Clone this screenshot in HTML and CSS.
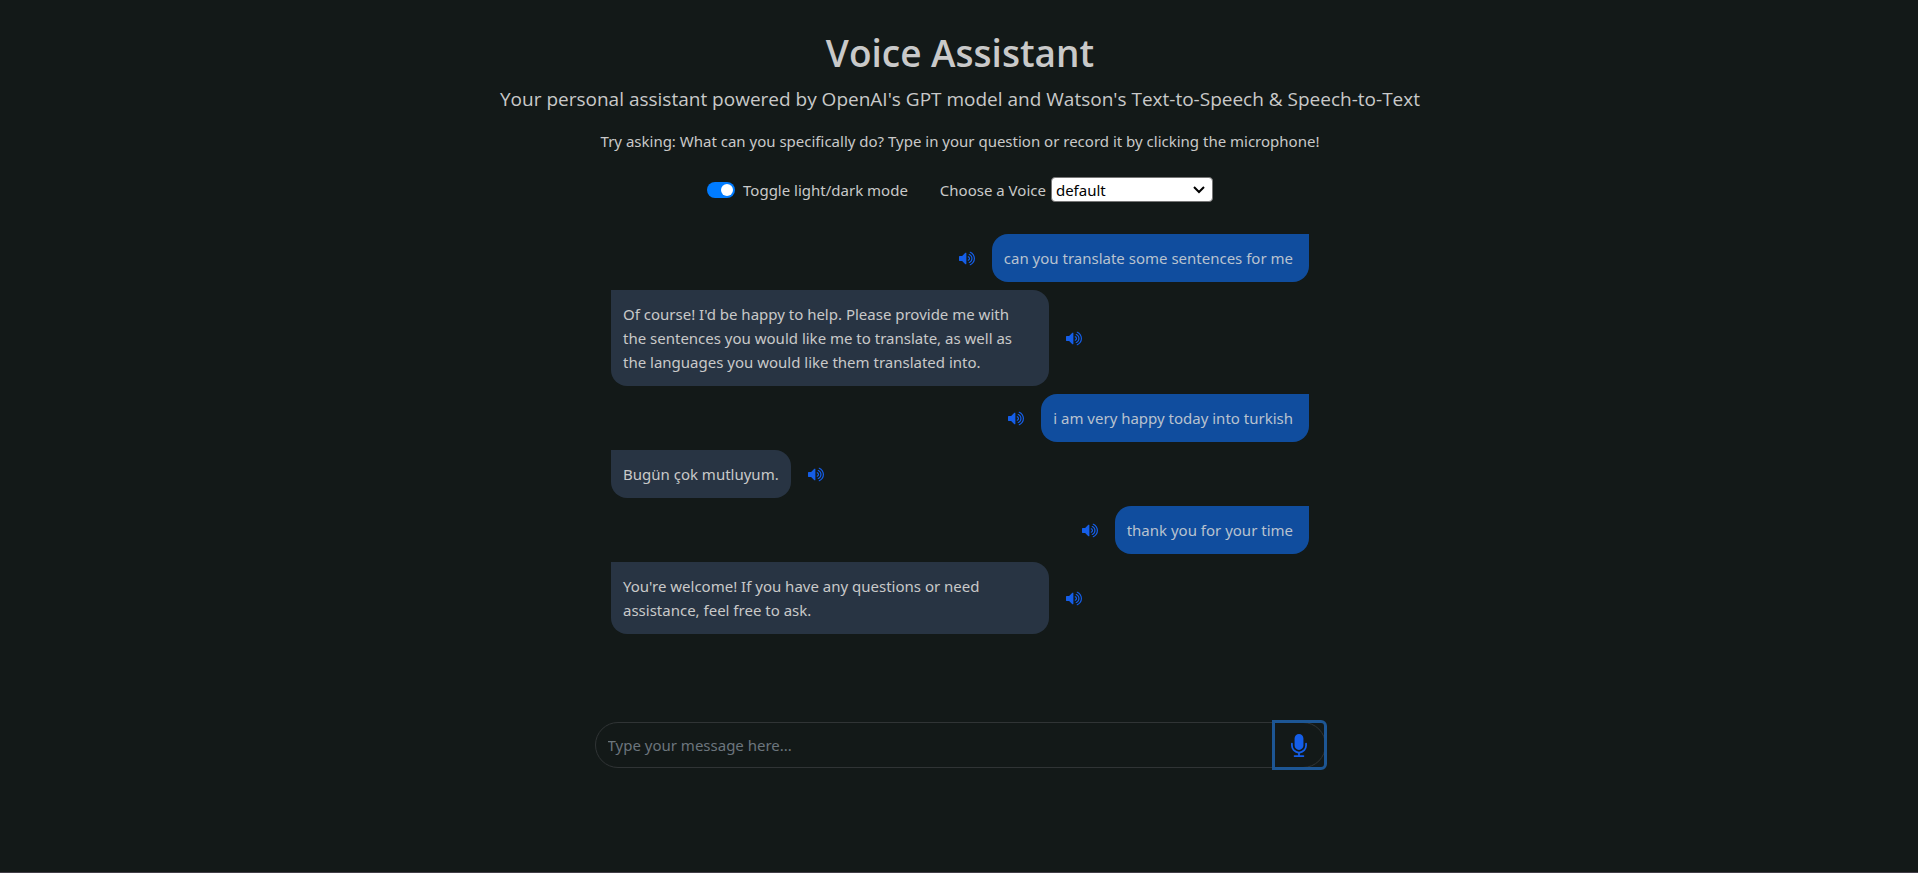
FILE: index.html
```html
<!DOCTYPE html>
<html lang="en">
<head>
<meta charset="utf-8">
<title>Voice Assistant</title>
<link rel="stylesheet" href="styles.css">
</head>
<body>
<svg class="sprite" aria-hidden="true">
  <symbol id="volume" viewBox="64 128 1664 1536"><path d="M832 352v1088q0 26-19 45t-45 19-45-19l-333-333h-262q-26 0-45-19t-19-45v-384q0-26 19-45t45-19h262l333-333q19-19 45-19t45 19 19 45zm384 544q0 76-42.5 141.5t-112.5 93.5q-10 5-25 5-26 0-45-18.5t-19-45.5q0-21 12-35.5t29-25 34-23 29-36 12-56.5-12-56.5-29-36-34-23-29-25-12-35.5q0-27 19-45.5t45-18.5q15 0 25 5 70 27 112.5 93t42.5 142zm256 0q0 153-85 282.5t-225 188.5q-13 5-25 5-27 0-46-19t-19-45q0-39 39-59 56-29 76-44 74-54 115.5-135.5t41.5-173.5-41.5-173.5-115.5-135.5q-20-15-76-44-39-20-39-59 0-26 19-45t45-19q13 0 26 5 140 59 225 188.5t85 282.5zm256 0q0 230-127 422.5t-338 283.5q-13 5-26 5-26 0-45-19t-19-45q0-36 39-59 7-4 22.5-10.5t22.5-10.5q46-25 82-51 123-91 192-227t69-289-69-289-192-227q-36-26-82-51-7-4-22.5-10.5t-22.5-10.5q-39-23-39-59 0-26 19-45t45-19q13 0 26 5 211 91 338 283.5t127 422.5z"/></symbol>
  <symbol id="mic" viewBox="320 0 1152 1664"><path d="M1472 704v128q0 221-147.5 384.5t-364.5 187.5v132h256q26 0 45 19t19 45-19 45-45 19h-640q-26 0-45-19t-19-45 19-45 45-19h256v-132q-217-24-364.5-187.5t-147.5-384.5v-128q0-26 19-45t45-19 45 19 19 45v128q0 185 131.5 316.5t316.5 131.5 316.5-131.5 131.5-316.5v-128q0-26 19-45t45-19 45 19 19 45zm-256-384v512q0 132-94 226t-226 94-226-94-94-226v-512q0-132 94-226t226-94 226 94 94 226z"/></symbol>
</svg>
<main class="page">
  <header class="intro">
    <h1 class="title">Voice Assistant</h1>
    <p class="lead">Your personal assistant powered by OpenAI's GPT model and Watson's Text-to-Speech &amp; Speech-to-Text</p>
    <p class="hint">Try asking: What can you specifically do? Type in your question or record it by clicking the microphone!</p>
  </header>
  <div class="options">
    <div class="option">
      <input class="switch" type="checkbox" role="switch" id="mode" checked>
      <label for="mode">Toggle light/dark mode</label>
    </div>
    <div class="voice">
      <label for="voice">Choose a Voice</label>
      <span class="select-wrap">
        <select class="select" id="voice"><option>default</option></select>
        <svg class="chevron" viewBox="0 0 12 8" aria-hidden="true"><path d="M1 1l5 5 5-5"/></svg>
      </span>
    </div>
  </div>
  <section class="chat" aria-label="Conversation">
    <div class="message user"><p class="bubble">can you translate some sentences for me</p><button class="speak" type="button" aria-label="Play message"><svg class="speak-icon"><use href="#volume"/></svg></button></div>
    <div class="message"><p class="bubble">Of course! I'd be happy to help. Please provide me with the&nbsp;sentences you would like me to translate, as well as the&nbsp;languages you would like them translated into.</p><button class="speak" type="button" aria-label="Play message"><svg class="speak-icon"><use href="#volume"/></svg></button></div>
    <div class="message user"><p class="bubble">i am very happy today into turkish</p><button class="speak" type="button" aria-label="Play message"><svg class="speak-icon"><use href="#volume"/></svg></button></div>
    <div class="message"><p class="bubble">Bugün çok mutluyum.</p><button class="speak" type="button" aria-label="Play message"><svg class="speak-icon"><use href="#volume"/></svg></button></div>
    <div class="message user"><p class="bubble">thank you for your time</p><button class="speak" type="button" aria-label="Play message"><svg class="speak-icon"><use href="#volume"/></svg></button></div>
    <div class="message"><p class="bubble">You're welcome! If you have any questions or need assistance, feel free to ask.</p><button class="speak" type="button" aria-label="Play message"><svg class="speak-icon"><use href="#volume"/></svg></button></div>
  </section>
  <form class="composer">
    <input class="field" type="text" placeholder="Type your message here..." aria-label="Message">
    <button class="record" type="button" aria-label="Record"><svg class="record-icon"><use href="#mic"/></svg></button>
  </form>
</main>
</body>
</html>
```
FILE: styles.css
```css
* { box-sizing: border-box; }
body {
  margin: 0;
  min-height: 100vh;
  background: #131918;
  border-bottom: 1px solid #423d47;
  color: #c9c9c9;
  font: 15px/24px "Noto Sans", "Open Sans", sans-serif;
}
.sprite { display: none; }
.page { padding: 29px 16px 0 18px; }
.intro { text-align: center; }
.title { margin: 0 0 7px; font-family: "Open Sans", sans-serif; font-size: 37px; line-height: 48px; font-weight: 600; }
.lead { margin: 0 0 15px; font-family: "Open Sans", sans-serif; font-size: 19px; line-height: 30px; }
.hint { margin: 0; }
.options { display: flex; justify-content: center; gap: 32px; margin-top: 24px; line-height: 24px; }
.option, .voice { display: flex; align-items: center; }
.option { gap: 8px; }
.voice { gap: 5px; }
.switch {
  appearance: none;
  display: flex;
  align-items: center;
  justify-content: flex-end;
  width: 28px;
  height: 16px;
  margin: 0;
  padding: 2px;
  border-radius: 8px;
  background: #007bff;
}
.switch::before { content: ""; width: 12px; height: 12px; border-radius: 50%; background: #fff; }
.switch:not(:checked) { justify-content: flex-start; background: #6c757d; }
.select-wrap { position: relative; display: flex; }
.select {
  appearance: none;
  width: 162px;
  height: 25px;
  padding: 0 24px 0 4px;
  border: 1px solid #767676;
  border-radius: 4px;
  background: #fff;
  color: #000;
  font: inherit;
  line-height: 22px;
}
.chevron { position: absolute; right: 8px; top: 9px; width: 12px; height: 8px; fill: none; stroke: #000; stroke-width: 2; pointer-events: none; }
.chat {
  display: flex;
  flex-direction: column;
  gap: 8px;
  max-width: 698px;
  min-height: 488px;
  margin: 32px auto 0;
}
.message { display: flex; align-items: center; }
.user { flex-direction: row-reverse; }
.bubble {
  max-width: 438px;
  margin: 0;
  padding: 12px;
  border-radius: 0 16px 16px 16px;
  background: #283443;
}
.user .bubble { padding-right: 16px; border-radius: 16px 0 16px 16px; background: #104d9e; color: #b8c2cf; }
.speak { display: flex; padding: 8px 17px; border: 0; background: none; }
.speak-icon { width: 16px; height: 15px; fill: #155ee8; }
.composer {
  display: flex;
  max-width: 731px;
  height: 46px;
  margin: 0 auto;
  border: 1px solid #303435;
  border-radius: 23px;
}
.field { flex: 1; min-width: 0; padding: 0 12px; border: 0; outline: 0; background: none; color: inherit; font: inherit; }
.field::placeholder { color: #6c757d; opacity: 1; }
.record {
  display: flex;
  align-items: center;
  justify-content: center;
  width: 55px;
  margin: -3px -2px -3px 0;
  border: 3px solid #1d5694;
  border-radius: 0 6px 6px 0;
  background: none;
}
.record-icon { width: 16px; height: 23px; fill: #155ee8; }
```
